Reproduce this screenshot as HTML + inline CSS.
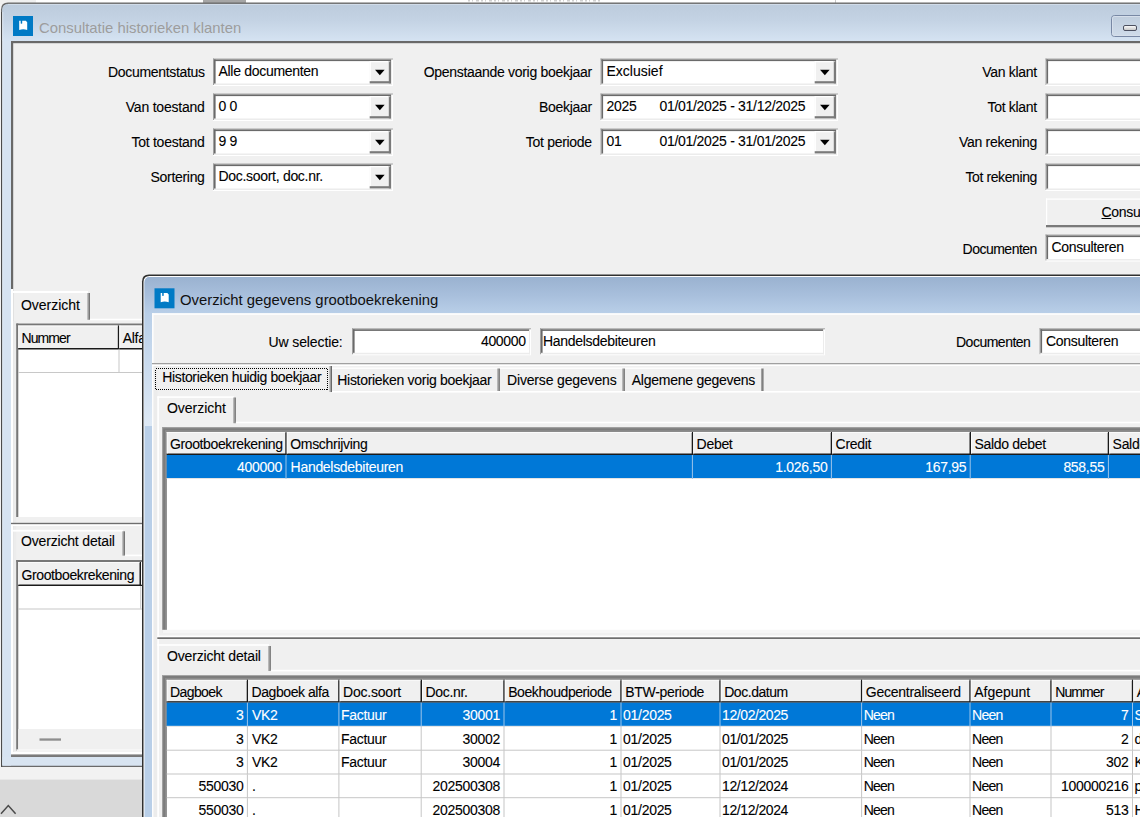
<!DOCTYPE html>
<html lang="nl">
<head>
<meta charset="utf-8">
<title>Consultatie historieken klanten</title>
<style>
*{box-sizing:border-box;margin:0;padding:0}
html,body{width:1140px;height:817px;overflow:hidden;background:#f2f2f2}
body{position:relative;font-family:"Liberation Sans",sans-serif;font-size:14px;letter-spacing:-0.3px;color:#000;line-height:16px;-webkit-text-stroke:0.1px #000}
svg{position:absolute;left:0;top:0}
.t{position:absolute;white-space:nowrap;height:16px;line-height:16px}
.r{text-align:right}
.w{color:#fff;-webkit-text-stroke-color:#fff}
.ttl{letter-spacing:0;-webkit-text-stroke:0;position:absolute;white-space:nowrap;font-size:15px;transform:scaleX(.99);line-height:20px;height:20px;transform-origin:0 50%}
</style>
</head>
<body>
<svg width="1140" height="817" viewBox="0 0 1140 817">
<rect x="0" y="0" width="1140" height="817" fill="#f2f2f2"/>
<rect x="0" y="0" width="1140" height="4" fill="#fff"/>
<rect x="0" y="0" width="36" height="4" fill="#f0f0f0"/>
<rect x="203" y="0" width="43" height="3" fill="#a6a6a6"/>
<rect x="835" y="0" width="1" height="3" fill="#c8c8c8"/>
<path d="M468 0.7 H600" stroke="#cfcfcf" stroke-width="1.6" stroke-dasharray="2 2 1 3 3 2"/>
<rect x="0" y="779.6" width="1140" height="37.4" fill="#d9d9d9"/>
<path d="M1 813.8 L8.3 805.6 L15.6 813.8" fill="none" stroke="#4a4a4a" stroke-width="1.5"/>
<defs><linearGradient id="g1" x1="0" y1="0" x2="0" y2="1"><stop offset="0" stop-color="#bccbdc"/><stop offset=".45" stop-color="#c4d3e4"/><stop offset="1" stop-color="#d5e3f2"/></linearGradient><linearGradient id="gm" x1="0" y1="0" x2="0" y2="1"><stop offset="0" stop-color="#fff"/><stop offset="1" stop-color="#c4c4c4"/></linearGradient><linearGradient id="gb" x1="0" y1="0" x2="0" y2="1"><stop offset="0" stop-color="#bfcddd"/><stop offset="1" stop-color="#d0dcea"/></linearGradient></defs>
<path d="M1 767 L1 9.5 Q1 2.5 8 2.5 L1200 2.5 L1200 767 Z" fill="#6a6a6a"/>
<path d="M2.3 765.5 L2.3 10 Q2.3 3.9 8.5 3.9 L1200 3.9 L1200 765.5 Z" fill="#d6e3f1"/>
<path d="M2.3 41 L2.3 10 Q2.3 3.9 8.5 3.9 L1200 3.9 L1200 41 Z" fill="url(#g1)"/>
<rect x="1" y="12" width="1.2" height="755" fill="#4c4c4c"/>
<rect x="8" y="3.9" width="1192" height="1" fill="#d3deea"/>
<rect x="2.3" y="12" width="0.9" height="745" fill="#e6eef7"/>
<rect x="13" y="16" width="20" height="20" fill="#007ac5"/>
<path transform="translate(13 16)" d="M6.2 4.8 L7.7 4.8 L7.7 7.4 L8.45 7.8 L9.2 7.4 L9.2 4.8 L12.8 4.8 L14.2 6.2 L14.2 13.9 Q10.2 12.7 6.2 13.9 Z" fill="#fff"/>
<rect x="1111.5" y="15.5" width="40" height="21" rx="3" fill="url(#gb)" stroke="#7888a4"/>
<rect x="1112.5" y="16.5" width="38" height="19" rx="2" fill="none" stroke="#d6dfeb"/>
<rect x="1123.5" y="25.5" width="13" height="5" rx="1.5" fill="url(#gm)" stroke="#4c5060"/>
<rect x="11" y="41" width="1189" height="716" fill="#696969"/>
<rect x="13.2" y="43.2" width="1186.8" height="711.3" fill="#f0f0f0"/>
<rect x="11" y="289" width="2.3" height="465.5" fill="#fff"/>
<rect x="13.3" y="321" width="2.9" height="430.5" fill="#ececec"/>
<rect x="11" y="751.8" width="1189" height="2.7" fill="#fff"/>
<rect x="11" y="754.6" width="1189" height="2.2" fill="#7c7c7c"/>
<rect x="2.3" y="757" width="8.7" height="8.5" fill="#d8e4f1"/>
<rect x="2.3" y="757" width="1197.7" height="8.5" fill="#d8e4f1"/>
<rect x="213" y="58.5" width="180" height="27.5" fill="#fff"/>
<rect x="213" y="58.5" width="180" height="1" fill="#a0a0a0"/>
<rect x="213" y="58.5" width="1" height="26.5" fill="#a0a0a0"/>
<rect x="214" y="59.5" width="178" height="1.6" fill="#6a6a6a"/>
<rect x="214" y="59.5" width="1.6" height="24.5" fill="#6a6a6a"/>
<rect x="214" y="83.5" width="178" height="1.5" fill="#ececec"/>
<rect x="391" y="59.5" width="1" height="25.5" fill="#ececec"/>
<rect x="369.7" y="61.1" width="21.3" height="22.3" fill="#f0f0f0"/>
<rect x="369.7" y="61.1" width="20.3" height="1.2" fill="#fff"/>
<rect x="369.7" y="61.1" width="1.2" height="21.3" fill="#fff"/>
<rect x="388.8" y="61.1" width="2.2" height="22.3" fill="#7a7a7a"/>
<rect x="369.7" y="81.2" width="21.3" height="2.2" fill="#7a7a7a"/>
<rect x="388.8" y="61.1" width="1.2" height="1" fill="#c0c0c0"/>
<path d="M375.05 69.65 L384.65 69.65 L379.85 75.35 Z" fill="#000"/>
<rect x="213" y="93.5" width="180" height="27.5" fill="#fff"/>
<rect x="213" y="93.5" width="180" height="1" fill="#a0a0a0"/>
<rect x="213" y="93.5" width="1" height="26.5" fill="#a0a0a0"/>
<rect x="214" y="94.5" width="178" height="1.6" fill="#6a6a6a"/>
<rect x="214" y="94.5" width="1.6" height="24.5" fill="#6a6a6a"/>
<rect x="214" y="118.5" width="178" height="1.5" fill="#ececec"/>
<rect x="391" y="94.5" width="1" height="25.5" fill="#ececec"/>
<rect x="369.7" y="96.1" width="21.3" height="22.3" fill="#f0f0f0"/>
<rect x="369.7" y="96.1" width="20.3" height="1.2" fill="#fff"/>
<rect x="369.7" y="96.1" width="1.2" height="21.3" fill="#fff"/>
<rect x="388.8" y="96.1" width="2.2" height="22.3" fill="#7a7a7a"/>
<rect x="369.7" y="116.2" width="21.3" height="2.2" fill="#7a7a7a"/>
<rect x="388.8" y="96.1" width="1.2" height="1" fill="#c0c0c0"/>
<path d="M375.05 104.65 L384.65 104.65 L379.85 110.35 Z" fill="#000"/>
<rect x="213" y="128.5" width="180" height="27.5" fill="#fff"/>
<rect x="213" y="128.5" width="180" height="1" fill="#a0a0a0"/>
<rect x="213" y="128.5" width="1" height="26.5" fill="#a0a0a0"/>
<rect x="214" y="129.5" width="178" height="1.6" fill="#6a6a6a"/>
<rect x="214" y="129.5" width="1.6" height="24.5" fill="#6a6a6a"/>
<rect x="214" y="153.5" width="178" height="1.5" fill="#ececec"/>
<rect x="391" y="129.5" width="1" height="25.5" fill="#ececec"/>
<rect x="369.7" y="131.1" width="21.3" height="22.3" fill="#f0f0f0"/>
<rect x="369.7" y="131.1" width="20.3" height="1.2" fill="#fff"/>
<rect x="369.7" y="131.1" width="1.2" height="21.3" fill="#fff"/>
<rect x="388.8" y="131.1" width="2.2" height="22.3" fill="#7a7a7a"/>
<rect x="369.7" y="151.2" width="21.3" height="2.2" fill="#7a7a7a"/>
<rect x="388.8" y="131.1" width="1.2" height="1" fill="#c0c0c0"/>
<path d="M375.05 139.65 L384.65 139.65 L379.85 145.35 Z" fill="#000"/>
<rect x="213" y="163.5" width="180" height="27.5" fill="#fff"/>
<rect x="213" y="163.5" width="180" height="1" fill="#a0a0a0"/>
<rect x="213" y="163.5" width="1" height="26.5" fill="#a0a0a0"/>
<rect x="214" y="164.5" width="178" height="1.6" fill="#6a6a6a"/>
<rect x="214" y="164.5" width="1.6" height="24.5" fill="#6a6a6a"/>
<rect x="214" y="188.5" width="178" height="1.5" fill="#ececec"/>
<rect x="391" y="164.5" width="1" height="25.5" fill="#ececec"/>
<rect x="369.7" y="166.1" width="21.3" height="22.3" fill="#f0f0f0"/>
<rect x="369.7" y="166.1" width="20.3" height="1.2" fill="#fff"/>
<rect x="369.7" y="166.1" width="1.2" height="21.3" fill="#fff"/>
<rect x="388.8" y="166.1" width="2.2" height="22.3" fill="#7a7a7a"/>
<rect x="369.7" y="186.2" width="21.3" height="2.2" fill="#7a7a7a"/>
<rect x="388.8" y="166.1" width="1.2" height="1" fill="#c0c0c0"/>
<path d="M375.05 174.65 L384.65 174.65 L379.85 180.35 Z" fill="#000"/>
<rect x="600.5" y="58.5" width="237.5" height="27.5" fill="#fff"/>
<rect x="600.5" y="58.5" width="237.5" height="1" fill="#a0a0a0"/>
<rect x="600.5" y="58.5" width="1" height="26.5" fill="#a0a0a0"/>
<rect x="601.5" y="59.5" width="235.5" height="1.6" fill="#6a6a6a"/>
<rect x="601.5" y="59.5" width="1.6" height="24.5" fill="#6a6a6a"/>
<rect x="601.5" y="83.5" width="235.5" height="1.5" fill="#ececec"/>
<rect x="836" y="59.5" width="1" height="25.5" fill="#ececec"/>
<rect x="814.7" y="61.1" width="21.3" height="22.3" fill="#f0f0f0"/>
<rect x="814.7" y="61.1" width="20.3" height="1.2" fill="#fff"/>
<rect x="814.7" y="61.1" width="1.2" height="21.3" fill="#fff"/>
<rect x="833.8" y="61.1" width="2.2" height="22.3" fill="#7a7a7a"/>
<rect x="814.7" y="81.2" width="21.3" height="2.2" fill="#7a7a7a"/>
<rect x="833.8" y="61.1" width="1.2" height="1" fill="#c0c0c0"/>
<path d="M820.05 69.65 L829.65 69.65 L824.85 75.35 Z" fill="#000"/>
<rect x="600.5" y="93.5" width="237.5" height="27.5" fill="#fff"/>
<rect x="600.5" y="93.5" width="237.5" height="1" fill="#a0a0a0"/>
<rect x="600.5" y="93.5" width="1" height="26.5" fill="#a0a0a0"/>
<rect x="601.5" y="94.5" width="235.5" height="1.6" fill="#6a6a6a"/>
<rect x="601.5" y="94.5" width="1.6" height="24.5" fill="#6a6a6a"/>
<rect x="601.5" y="118.5" width="235.5" height="1.5" fill="#ececec"/>
<rect x="836" y="94.5" width="1" height="25.5" fill="#ececec"/>
<rect x="814.7" y="96.1" width="21.3" height="22.3" fill="#f0f0f0"/>
<rect x="814.7" y="96.1" width="20.3" height="1.2" fill="#fff"/>
<rect x="814.7" y="96.1" width="1.2" height="21.3" fill="#fff"/>
<rect x="833.8" y="96.1" width="2.2" height="22.3" fill="#7a7a7a"/>
<rect x="814.7" y="116.2" width="21.3" height="2.2" fill="#7a7a7a"/>
<rect x="833.8" y="96.1" width="1.2" height="1" fill="#c0c0c0"/>
<path d="M820.05 104.65 L829.65 104.65 L824.85 110.35 Z" fill="#000"/>
<rect x="600.5" y="128.5" width="237.5" height="27.5" fill="#fff"/>
<rect x="600.5" y="128.5" width="237.5" height="1" fill="#a0a0a0"/>
<rect x="600.5" y="128.5" width="1" height="26.5" fill="#a0a0a0"/>
<rect x="601.5" y="129.5" width="235.5" height="1.6" fill="#6a6a6a"/>
<rect x="601.5" y="129.5" width="1.6" height="24.5" fill="#6a6a6a"/>
<rect x="601.5" y="153.5" width="235.5" height="1.5" fill="#ececec"/>
<rect x="836" y="129.5" width="1" height="25.5" fill="#ececec"/>
<rect x="814.7" y="131.1" width="21.3" height="22.3" fill="#f0f0f0"/>
<rect x="814.7" y="131.1" width="20.3" height="1.2" fill="#fff"/>
<rect x="814.7" y="131.1" width="1.2" height="21.3" fill="#fff"/>
<rect x="833.8" y="131.1" width="2.2" height="22.3" fill="#7a7a7a"/>
<rect x="814.7" y="151.2" width="21.3" height="2.2" fill="#7a7a7a"/>
<rect x="833.8" y="131.1" width="1.2" height="1" fill="#c0c0c0"/>
<path d="M820.05 139.65 L829.65 139.65 L824.85 145.35 Z" fill="#000"/>
<rect x="1045.5" y="58.5" width="154.5" height="27.5" fill="#fff"/>
<rect x="1045.5" y="58.5" width="154.5" height="1" fill="#a0a0a0"/>
<rect x="1045.5" y="58.5" width="1" height="26.5" fill="#a0a0a0"/>
<rect x="1046.5" y="59.5" width="152.5" height="1.6" fill="#6a6a6a"/>
<rect x="1046.5" y="59.5" width="1.6" height="24.5" fill="#6a6a6a"/>
<rect x="1046.5" y="83.5" width="152.5" height="1.5" fill="#ececec"/>
<rect x="1198" y="59.5" width="1" height="25.5" fill="#ececec"/>
<rect x="1045.5" y="93.5" width="154.5" height="27.5" fill="#fff"/>
<rect x="1045.5" y="93.5" width="154.5" height="1" fill="#a0a0a0"/>
<rect x="1045.5" y="93.5" width="1" height="26.5" fill="#a0a0a0"/>
<rect x="1046.5" y="94.5" width="152.5" height="1.6" fill="#6a6a6a"/>
<rect x="1046.5" y="94.5" width="1.6" height="24.5" fill="#6a6a6a"/>
<rect x="1046.5" y="118.5" width="152.5" height="1.5" fill="#ececec"/>
<rect x="1198" y="94.5" width="1" height="25.5" fill="#ececec"/>
<rect x="1045.5" y="128.5" width="154.5" height="27.5" fill="#fff"/>
<rect x="1045.5" y="128.5" width="154.5" height="1" fill="#a0a0a0"/>
<rect x="1045.5" y="128.5" width="1" height="26.5" fill="#a0a0a0"/>
<rect x="1046.5" y="129.5" width="152.5" height="1.6" fill="#6a6a6a"/>
<rect x="1046.5" y="129.5" width="1.6" height="24.5" fill="#6a6a6a"/>
<rect x="1046.5" y="153.5" width="152.5" height="1.5" fill="#ececec"/>
<rect x="1198" y="129.5" width="1" height="25.5" fill="#ececec"/>
<rect x="1045.5" y="163.5" width="154.5" height="27.5" fill="#fff"/>
<rect x="1045.5" y="163.5" width="154.5" height="1" fill="#a0a0a0"/>
<rect x="1045.5" y="163.5" width="1" height="26.5" fill="#a0a0a0"/>
<rect x="1046.5" y="164.5" width="152.5" height="1.6" fill="#6a6a6a"/>
<rect x="1046.5" y="164.5" width="1.6" height="24.5" fill="#6a6a6a"/>
<rect x="1046.5" y="188.5" width="152.5" height="1.5" fill="#ececec"/>
<rect x="1198" y="164.5" width="1" height="25.5" fill="#ececec"/>
<rect x="1046" y="198.5" width="154" height="28.8" fill="#f0f0f0"/>
<rect x="1046" y="198.5" width="154" height="1.2" fill="#fff"/>
<rect x="1046" y="198.5" width="1.2" height="28.5" fill="#fff"/>
<rect x="1046" y="225" width="154" height="2.3" fill="#7a7a7a"/>
<rect x="1045.5" y="234.5" width="154.5" height="27" fill="#fff"/>
<rect x="1045.5" y="234.5" width="154.5" height="1" fill="#a0a0a0"/>
<rect x="1045.5" y="234.5" width="1" height="26" fill="#a0a0a0"/>
<rect x="1046.5" y="235.5" width="152.5" height="1.6" fill="#6a6a6a"/>
<rect x="1046.5" y="235.5" width="1.6" height="24" fill="#6a6a6a"/>
<rect x="1046.5" y="259" width="152.5" height="1.5" fill="#ececec"/>
<rect x="1198" y="235.5" width="1" height="25" fill="#ececec"/>
<rect x="11" y="291" width="77" height="2" fill="#fff"/>
<rect x="87.4" y="293" width="1.2" height="26.8" fill="#a0a0a0"/>
<rect x="88.6" y="293" width="1.3" height="26.8" fill="#696969"/>
<rect x="89.9" y="318.7" width="1110.1" height="1.6" fill="#fff"/>
<rect x="16.4" y="323.5" width="1183.6" height="193.5" fill="#fff"/>
<rect x="16.4" y="323.5" width="1183.6" height="2" fill="#777"/>
<rect x="16.2" y="323.5" width="2.1" height="193.5" fill="#777"/>
<rect x="18.2" y="325.5" width="101.1" height="24" fill="#1a1a1a"/>
<rect x="18.2" y="325.5" width="99.6" height="22.5" fill="#f0f0f0"/>
<rect x="18.2" y="325.5" width="99.6" height="1" fill="#fbfbfb"/>
<rect x="18.2" y="325.5" width="1" height="22.5" fill="#fbfbfb"/>
<rect x="118.5" y="349.5" width="1" height="22.5" fill="#c8c8c8"/>
<rect x="119.3" y="325.5" width="281.5" height="24" fill="#1a1a1a"/>
<rect x="119.3" y="325.5" width="280" height="22.5" fill="#f0f0f0"/>
<rect x="119.3" y="325.5" width="280" height="1" fill="#fbfbfb"/>
<rect x="119.3" y="325.5" width="1" height="22.5" fill="#fbfbfb"/>
<rect x="400" y="349.5" width="1" height="22.5" fill="#c8c8c8"/>
<rect x="18.2" y="372" width="1181.8" height="1" fill="#c8c8c8"/>
<rect x="11" y="522.8" width="1189" height="1.6" fill="#6e6e6e"/>
<rect x="11" y="524.4" width="1189" height="1.6" fill="#fff"/>
<rect x="11" y="529.8" width="112" height="1.8" fill="#fff"/>
<rect x="122.4" y="531.3" width="1.2" height="24.3" fill="#a0a0a0"/>
<rect x="123.6" y="531.3" width="1.3" height="24.3" fill="#696969"/>
<rect x="124.9" y="554.6" width="1075.1" height="1.6" fill="#fff"/>
<rect x="16.4" y="560" width="1183.6" height="191" fill="#fff"/>
<rect x="16.4" y="560" width="1183.6" height="2" fill="#777"/>
<rect x="16.2" y="560" width="2.1" height="191" fill="#777"/>
<rect x="18.2" y="562" width="122.8" height="24" fill="#1a1a1a"/>
<rect x="18.2" y="562" width="121.3" height="22.5" fill="#f0f0f0"/>
<rect x="18.2" y="562" width="121.3" height="1" fill="#fbfbfb"/>
<rect x="18.2" y="562" width="1" height="22.5" fill="#fbfbfb"/>
<rect x="140.2" y="586" width="1" height="22.5" fill="#c8c8c8"/>
<rect x="141" y="562" width="259.8" height="24" fill="#1a1a1a"/>
<rect x="141" y="562" width="258.3" height="22.5" fill="#f0f0f0"/>
<rect x="141" y="562" width="258.3" height="1" fill="#fbfbfb"/>
<rect x="141" y="562" width="1" height="22.5" fill="#fbfbfb"/>
<rect x="400" y="586" width="1" height="22.5" fill="#c8c8c8"/>
<rect x="18.2" y="608.5" width="1181.8" height="1" fill="#c8c8c8"/>
<rect x="18.2" y="729" width="1181.8" height="20.3" fill="#f0f0f0"/>
<rect x="16.4" y="749.3" width="1183.6" height="1.7" fill="#f4f4f4"/>
<rect x="39.5" y="738.4" width="21.5" height="2.3" fill="#8e8e8e"/>
</svg>
<div class="ttl" id="t1" style="left:39px;top:17.5px;color:#9d9d9d">Consultatie historieken klanten</div>
<div class="t r" style="right:935.4px;top:64.15px;letter-spacing:-0.33px;">Documentstatus</div>
<div class="t" style="left:218.5px;top:62.95px;">Alle documenten</div>
<div class="t r" style="right:935.4px;top:99.15px;letter-spacing:-0.22px;">Van toestand</div>
<div class="t" style="left:218.5px;top:97.95px;">0 0</div>
<div class="t r" style="right:935.4px;top:134.15px;letter-spacing:-0.26px;">Tot toestand</div>
<div class="t" style="left:218.5px;top:132.95px;">9 9</div>
<div class="t r" style="right:935.4px;top:169.15px;">Sortering</div>
<div class="t" style="left:218.5px;top:167.95px;">Doc.soort, doc.nr.</div>
<div class="t r" style="right:548.2px;top:64.15px;">Openstaande vorig boekjaar</div>
<div class="t" style="left:606.5px;top:62.95px;letter-spacing:0px;">Exclusief</div>
<div class="t r" style="right:548.2px;top:99.15px;">Boekjaar</div>
<div class="t" style="left:606.5px;top:97.95px;">2025</div>
<div class="t" style="left:659.5px;top:97.95px;">01/01/2025 - 31/12/2025</div>
<div class="t r" style="right:548.2px;top:134.15px;">Tot periode</div>
<div class="t" style="left:606.5px;top:132.95px;">01</div>
<div class="t" style="left:659.5px;top:132.95px;">01/01/2025 - 31/01/2025</div>
<div class="t r" style="right:103.1px;top:64.15px;">Van klant</div>
<div class="t r" style="right:103.1px;top:99.15px;">Tot klant</div>
<div class="t r" style="right:103.1px;top:134.15px;">Van rekening</div>
<div class="t r" style="right:103.1px;top:169.15px;letter-spacing:-0.4px;">Tot rekening</div>
<div class="t" style="left:1101.5px;top:204.45px;"><u>C</u>onsulteren</div>
<div class="t r" style="right:103.1px;top:240.85px;letter-spacing:-0.5px;">Documenten</div>
<div class="t" style="left:1051.5px;top:239.35px;">Consulteren</div>
<div class="t" style="left:21px;top:296.95px;letter-spacing:-0.03px;">Overzicht</div>
<div class="t" style="left:21.5px;top:330.25px;letter-spacing:-0.9px;">Nummer</div>
<div class="t" style="left:122.7px;top:330.25px;">Alfa</div>
<div class="t" style="left:21px;top:532.85px;letter-spacing:-0.17px;">Overzicht detail</div>
<div class="t" style="left:21.5px;top:566.75px;letter-spacing:-0.38px;">Grootboekrekening</div>
<div class="t" style="left:144.4px;top:566.75px;">Omschrijving</div>
<svg width="1140" height="817" viewBox="0 0 1140 817">
<defs><linearGradient id="g2" x1="0" y1="0" x2="0" y2="1"><stop offset="0" stop-color="#9ab2d0"/><stop offset=".5" stop-color="#a8bfdc"/><stop offset="1" stop-color="#b9cfe8"/></linearGradient></defs>
<path d="M142 817 L142 281.5 Q142 274.5 149 274.5 L1200 274.5 L1200 817 Z" fill="#303030"/>
<path d="M143.5 817 L143.5 282 Q143.5 276 149.5 276 L1200 276 L1200 817 Z" fill="#fff"/>
<path d="M144.5 817 L144.5 282.5 Q144.5 277 150 277 L1200 277 L1200 817 Z" fill="#b9cfe8"/>
<path d="M144.5 313.5 L144.5 282.5 Q144.5 277 150 277 L1200 277 L1200 313.5 Z" fill="url(#g2)"/>
<defs><linearGradient id="g3" x1="0" y1="0" x2="0" y2="1"><stop offset="0" stop-color="#b9cfe8"/><stop offset="1" stop-color="#dee9f5"/></linearGradient></defs>
<rect x="144.5" y="313.5" width="7.5" height="112.5" fill="url(#g3)"/>
<rect x="154.5" y="288.3" width="20" height="20" fill="#007ac5"/>
<path transform="translate(154.5 288.3)" d="M6.2 4.8 L7.7 4.8 L7.7 7.4 L8.45 7.8 L9.2 7.4 L9.2 4.8 L12.8 4.8 L14.2 6.2 L14.2 13.9 Q10.2 12.7 6.2 13.9 Z" fill="#fff"/>
<rect x="152" y="313.3" width="1048" height="503.7" fill="#f0f0f0"/>
<rect x="152" y="313.3" width="1048" height="1.5" fill="#fff"/>
<rect x="152" y="313.3" width="1.6" height="503.7" fill="#fdfdfd"/>
<rect x="153.6" y="366" width="3.7" height="451" fill="#ececec"/>
<rect x="352" y="328.3" width="179" height="27" fill="#fff"/>
<rect x="352" y="328.3" width="179" height="1" fill="#a0a0a0"/>
<rect x="352" y="328.3" width="1" height="26" fill="#a0a0a0"/>
<rect x="353" y="329.3" width="177" height="1.6" fill="#6a6a6a"/>
<rect x="353" y="329.3" width="1.6" height="24" fill="#6a6a6a"/>
<rect x="353" y="352.8" width="177" height="1.5" fill="#ececec"/>
<rect x="529" y="329.3" width="1" height="25" fill="#ececec"/>
<rect x="540" y="328.3" width="285" height="27" fill="#fff"/>
<rect x="540" y="328.3" width="285" height="1" fill="#a0a0a0"/>
<rect x="540" y="328.3" width="1" height="26" fill="#a0a0a0"/>
<rect x="541" y="329.3" width="283" height="1.6" fill="#6a6a6a"/>
<rect x="541" y="329.3" width="1.6" height="24" fill="#6a6a6a"/>
<rect x="541" y="352.8" width="283" height="1.5" fill="#ececec"/>
<rect x="823" y="329.3" width="1" height="25" fill="#ececec"/>
<rect x="1039.5" y="328.3" width="160.5" height="27" fill="#fff"/>
<rect x="1039.5" y="328.3" width="160.5" height="1" fill="#a0a0a0"/>
<rect x="1039.5" y="328.3" width="1" height="26" fill="#a0a0a0"/>
<rect x="1040.5" y="329.3" width="158.5" height="1.6" fill="#6a6a6a"/>
<rect x="1040.5" y="329.3" width="1.6" height="24" fill="#6a6a6a"/>
<rect x="1040.5" y="352.8" width="158.5" height="1.5" fill="#ececec"/>
<rect x="1198" y="329.3" width="1" height="25" fill="#ececec"/>
<rect x="152" y="363" width="1048" height="1.5" fill="#a0a0a0"/>
<rect x="152" y="364.5" width="1048" height="1.5" fill="#fff"/>
<rect x="155.5" y="368.5" width="172" height="21" fill="none" stroke="#000" stroke-width="1" stroke-dasharray="1 1" shape-rendering="crispEdges"/>
<rect x="329.5" y="366" width="1.2" height="26" fill="#a0a0a0"/>
<rect x="330.7" y="366" width="1.3" height="26" fill="#696969"/>
<rect x="332" y="367.5" width="431" height="1.5" fill="#fcfcfc"/>
<rect x="497.3" y="368.5" width="1.2" height="22.5" fill="#a0a0a0"/>
<rect x="498.5" y="368.5" width="1.3" height="22.5" fill="#696969"/>
<rect x="622.3" y="368.5" width="1.2" height="22.5" fill="#a0a0a0"/>
<rect x="623.5" y="368.5" width="1.3" height="22.5" fill="#696969"/>
<rect x="761" y="368.5" width="1.2" height="22.5" fill="#a0a0a0"/>
<rect x="762.2" y="368.5" width="1.3" height="22.5" fill="#696969"/>
<rect x="332" y="391" width="868" height="1.6" fill="#fff"/>
<rect x="157.3" y="396.3" width="76.7" height="1.6" fill="#fff"/>
<rect x="157.3" y="396.3" width="1.6" height="420.7" fill="#fff"/>
<rect x="233.3" y="397.5" width="1.2" height="25.7" fill="#a0a0a0"/>
<rect x="234.5" y="397.5" width="1.3" height="25.7" fill="#696969"/>
<rect x="235.8" y="421.7" width="964.2" height="1.6" fill="#fff"/>
<rect x="162.1" y="427.2" width="1037.9" height="205.8" fill="#fff"/>
<rect x="162.1" y="427.2" width="1037.9" height="4.8" fill="#7c7c7c"/>
<rect x="162.1" y="427.2" width="4.6" height="205.8" fill="#7c7c7c"/>
<rect x="162.1" y="427.2" width="1037.9" height="1" fill="#a4a4a4"/>
<rect x="162.1" y="427.2" width="1" height="205.8" fill="#a4a4a4"/>
<rect x="165.1" y="430.2" width="1034.9" height="1.8" fill="#8c8c8c"/>
<rect x="165.1" y="430.2" width="1.6" height="202.8" fill="#8c8c8c"/>
<rect x="166.7" y="432" width="120.1" height="23" fill="#1a1a1a"/>
<rect x="166.7" y="432" width="118.6" height="21.5" fill="#f0f0f0"/>
<rect x="166.7" y="432" width="118.6" height="1" fill="#fbfbfb"/>
<rect x="166.7" y="432" width="1" height="21.5" fill="#fbfbfb"/>
<rect x="286.8" y="432" width="406.4" height="23" fill="#1a1a1a"/>
<rect x="286.8" y="432" width="404.9" height="21.5" fill="#f0f0f0"/>
<rect x="286.8" y="432" width="404.9" height="1" fill="#fbfbfb"/>
<rect x="286.8" y="432" width="1" height="21.5" fill="#fbfbfb"/>
<rect x="693.2" y="432" width="139" height="23" fill="#1a1a1a"/>
<rect x="693.2" y="432" width="137.5" height="21.5" fill="#f0f0f0"/>
<rect x="693.2" y="432" width="137.5" height="1" fill="#fbfbfb"/>
<rect x="693.2" y="432" width="1" height="21.5" fill="#fbfbfb"/>
<rect x="832.2" y="432" width="138.8" height="23" fill="#1a1a1a"/>
<rect x="832.2" y="432" width="137.3" height="21.5" fill="#f0f0f0"/>
<rect x="832.2" y="432" width="137.3" height="1" fill="#fbfbfb"/>
<rect x="832.2" y="432" width="1" height="21.5" fill="#fbfbfb"/>
<rect x="971" y="432" width="138.2" height="23" fill="#1a1a1a"/>
<rect x="971" y="432" width="136.7" height="21.5" fill="#f0f0f0"/>
<rect x="971" y="432" width="136.7" height="1" fill="#fbfbfb"/>
<rect x="971" y="432" width="1" height="21.5" fill="#fbfbfb"/>
<rect x="1109.2" y="432" width="191.6" height="23" fill="#1a1a1a"/>
<rect x="1109.2" y="432" width="190.1" height="21.5" fill="#f0f0f0"/>
<rect x="1109.2" y="432" width="190.1" height="1" fill="#fbfbfb"/>
<rect x="1109.2" y="432" width="1" height="21.5" fill="#fbfbfb"/>
<rect x="166.7" y="455" width="1033.3" height="23" fill="#0078d7"/>
<rect x="166.7" y="478" width="1033.3" height="1" fill="#e4e4e4"/>
<rect x="285.5" y="455" width="1" height="24" fill="#9cc4ea"/>
<rect x="691.9" y="455" width="1" height="24" fill="#9cc4ea"/>
<rect x="830.9" y="455" width="1" height="24" fill="#9cc4ea"/>
<rect x="969.7" y="455" width="1" height="24" fill="#9cc4ea"/>
<rect x="1107.9" y="455" width="1" height="24" fill="#9cc4ea"/>
<rect x="1299.5" y="455" width="1" height="24" fill="#9cc4ea"/>
<rect x="162.1" y="629.8" width="1037.9" height="3.2" fill="#f6f6f6"/>
<rect x="157.3" y="635.6" width="1042.7" height="1.7" fill="#fff"/>
<rect x="157.3" y="637.3" width="1042.7" height="1.7" fill="#6e6e6e"/>
<rect x="157.3" y="644.2" width="111.7" height="1.6" fill="#fff"/>
<rect x="268.3" y="646" width="1.2" height="25" fill="#a0a0a0"/>
<rect x="269.5" y="646" width="1.3" height="25" fill="#696969"/>
<rect x="270.8" y="669.8" width="929.2" height="1.6" fill="#fff"/>
<rect x="162.1" y="675" width="1037.9" height="142" fill="#fff"/>
<rect x="162.1" y="675" width="1037.9" height="4.8" fill="#7c7c7c"/>
<rect x="162.1" y="675" width="4.6" height="142" fill="#7c7c7c"/>
<rect x="162.1" y="675" width="1037.9" height="1" fill="#a4a4a4"/>
<rect x="162.1" y="675" width="1" height="142" fill="#a4a4a4"/>
<rect x="165.1" y="678" width="1034.9" height="1.8" fill="#8c8c8c"/>
<rect x="165.1" y="678" width="1.6" height="139" fill="#8c8c8c"/>
<rect x="166.7" y="679.8" width="81.5" height="22.9" fill="#1a1a1a"/>
<rect x="166.7" y="679.8" width="80" height="21.4" fill="#f0f0f0"/>
<rect x="166.7" y="679.8" width="80" height="1" fill="#fbfbfb"/>
<rect x="166.7" y="679.8" width="1" height="21.4" fill="#fbfbfb"/>
<rect x="248.2" y="679.8" width="91.5" height="22.9" fill="#1a1a1a"/>
<rect x="248.2" y="679.8" width="90" height="21.4" fill="#f0f0f0"/>
<rect x="248.2" y="679.8" width="90" height="1" fill="#fbfbfb"/>
<rect x="248.2" y="679.8" width="1" height="21.4" fill="#fbfbfb"/>
<rect x="339.7" y="679.8" width="82.3" height="22.9" fill="#1a1a1a"/>
<rect x="339.7" y="679.8" width="80.8" height="21.4" fill="#f0f0f0"/>
<rect x="339.7" y="679.8" width="80.8" height="1" fill="#fbfbfb"/>
<rect x="339.7" y="679.8" width="1" height="21.4" fill="#fbfbfb"/>
<rect x="422" y="679.8" width="82.8" height="22.9" fill="#1a1a1a"/>
<rect x="422" y="679.8" width="81.3" height="21.4" fill="#f0f0f0"/>
<rect x="422" y="679.8" width="81.3" height="1" fill="#fbfbfb"/>
<rect x="422" y="679.8" width="1" height="21.4" fill="#fbfbfb"/>
<rect x="504.8" y="679.8" width="117" height="22.9" fill="#1a1a1a"/>
<rect x="504.8" y="679.8" width="115.5" height="21.4" fill="#f0f0f0"/>
<rect x="504.8" y="679.8" width="115.5" height="1" fill="#fbfbfb"/>
<rect x="504.8" y="679.8" width="1" height="21.4" fill="#fbfbfb"/>
<rect x="621.8" y="679.8" width="99" height="22.9" fill="#1a1a1a"/>
<rect x="621.8" y="679.8" width="97.5" height="21.4" fill="#f0f0f0"/>
<rect x="621.8" y="679.8" width="97.5" height="1" fill="#fbfbfb"/>
<rect x="621.8" y="679.8" width="1" height="21.4" fill="#fbfbfb"/>
<rect x="720.8" y="679.8" width="141.6" height="22.9" fill="#1a1a1a"/>
<rect x="720.8" y="679.8" width="140.1" height="21.4" fill="#f0f0f0"/>
<rect x="720.8" y="679.8" width="140.1" height="1" fill="#fbfbfb"/>
<rect x="720.8" y="679.8" width="1" height="21.4" fill="#fbfbfb"/>
<rect x="862.4" y="679.8" width="108.4" height="22.9" fill="#1a1a1a"/>
<rect x="862.4" y="679.8" width="106.9" height="21.4" fill="#f0f0f0"/>
<rect x="862.4" y="679.8" width="106.9" height="1" fill="#fbfbfb"/>
<rect x="862.4" y="679.8" width="1" height="21.4" fill="#fbfbfb"/>
<rect x="970.8" y="679.8" width="81" height="22.9" fill="#1a1a1a"/>
<rect x="970.8" y="679.8" width="79.5" height="21.4" fill="#f0f0f0"/>
<rect x="970.8" y="679.8" width="79.5" height="1" fill="#fbfbfb"/>
<rect x="970.8" y="679.8" width="1" height="21.4" fill="#fbfbfb"/>
<rect x="1051.8" y="679.8" width="81.5" height="22.9" fill="#1a1a1a"/>
<rect x="1051.8" y="679.8" width="80" height="21.4" fill="#f0f0f0"/>
<rect x="1051.8" y="679.8" width="80" height="1" fill="#fbfbfb"/>
<rect x="1051.8" y="679.8" width="1" height="21.4" fill="#fbfbfb"/>
<rect x="1133.3" y="679.8" width="167.5" height="22.9" fill="#1a1a1a"/>
<rect x="1133.3" y="679.8" width="166" height="21.4" fill="#f0f0f0"/>
<rect x="1133.3" y="679.8" width="166" height="1" fill="#fbfbfb"/>
<rect x="1133.3" y="679.8" width="1" height="21.4" fill="#fbfbfb"/>
<rect x="166.7" y="702.7" width="1033.3" height="23.2" fill="#0078d7"/>
<rect x="166.7" y="725.9" width="1033.3" height="1" fill="#e4e4e4"/>
<rect x="246.9" y="702.7" width="1" height="24.2" fill="#9cc4ea"/>
<rect x="338.4" y="702.7" width="1" height="24.2" fill="#9cc4ea"/>
<rect x="420.7" y="702.7" width="1" height="24.2" fill="#9cc4ea"/>
<rect x="503.5" y="702.7" width="1" height="24.2" fill="#9cc4ea"/>
<rect x="620.5" y="702.7" width="1" height="24.2" fill="#9cc4ea"/>
<rect x="719.5" y="702.7" width="1" height="24.2" fill="#9cc4ea"/>
<rect x="861.1" y="702.7" width="1" height="24.2" fill="#9cc4ea"/>
<rect x="969.5" y="702.7" width="1" height="24.2" fill="#9cc4ea"/>
<rect x="1050.5" y="702.7" width="1" height="24.2" fill="#9cc4ea"/>
<rect x="1132" y="702.7" width="1" height="24.2" fill="#9cc4ea"/>
<rect x="1299.5" y="702.7" width="1" height="24.2" fill="#9cc4ea"/>
<rect x="166.7" y="749.7" width="1033.3" height="1" fill="#c6c6c6"/>
<rect x="246.9" y="726.9" width="1" height="23.8" fill="#c6c6c6"/>
<rect x="338.4" y="726.9" width="1" height="23.8" fill="#c6c6c6"/>
<rect x="420.7" y="726.9" width="1" height="23.8" fill="#c6c6c6"/>
<rect x="503.5" y="726.9" width="1" height="23.8" fill="#c6c6c6"/>
<rect x="620.5" y="726.9" width="1" height="23.8" fill="#c6c6c6"/>
<rect x="719.5" y="726.9" width="1" height="23.8" fill="#c6c6c6"/>
<rect x="861.1" y="726.9" width="1" height="23.8" fill="#c6c6c6"/>
<rect x="969.5" y="726.9" width="1" height="23.8" fill="#c6c6c6"/>
<rect x="1050.5" y="726.9" width="1" height="23.8" fill="#c6c6c6"/>
<rect x="1132" y="726.9" width="1" height="23.8" fill="#c6c6c6"/>
<rect x="1299.5" y="726.9" width="1" height="23.8" fill="#c6c6c6"/>
<rect x="166.7" y="773.5" width="1033.3" height="1" fill="#c6c6c6"/>
<rect x="246.9" y="750.7" width="1" height="23.8" fill="#c6c6c6"/>
<rect x="338.4" y="750.7" width="1" height="23.8" fill="#c6c6c6"/>
<rect x="420.7" y="750.7" width="1" height="23.8" fill="#c6c6c6"/>
<rect x="503.5" y="750.7" width="1" height="23.8" fill="#c6c6c6"/>
<rect x="620.5" y="750.7" width="1" height="23.8" fill="#c6c6c6"/>
<rect x="719.5" y="750.7" width="1" height="23.8" fill="#c6c6c6"/>
<rect x="861.1" y="750.7" width="1" height="23.8" fill="#c6c6c6"/>
<rect x="969.5" y="750.7" width="1" height="23.8" fill="#c6c6c6"/>
<rect x="1050.5" y="750.7" width="1" height="23.8" fill="#c6c6c6"/>
<rect x="1132" y="750.7" width="1" height="23.8" fill="#c6c6c6"/>
<rect x="1299.5" y="750.7" width="1" height="23.8" fill="#c6c6c6"/>
<rect x="166.7" y="797.2" width="1033.3" height="1" fill="#c6c6c6"/>
<rect x="246.9" y="774.5" width="1" height="23.7" fill="#c6c6c6"/>
<rect x="338.4" y="774.5" width="1" height="23.7" fill="#c6c6c6"/>
<rect x="420.7" y="774.5" width="1" height="23.7" fill="#c6c6c6"/>
<rect x="503.5" y="774.5" width="1" height="23.7" fill="#c6c6c6"/>
<rect x="620.5" y="774.5" width="1" height="23.7" fill="#c6c6c6"/>
<rect x="719.5" y="774.5" width="1" height="23.7" fill="#c6c6c6"/>
<rect x="861.1" y="774.5" width="1" height="23.7" fill="#c6c6c6"/>
<rect x="969.5" y="774.5" width="1" height="23.7" fill="#c6c6c6"/>
<rect x="1050.5" y="774.5" width="1" height="23.7" fill="#c6c6c6"/>
<rect x="1132" y="774.5" width="1" height="23.7" fill="#c6c6c6"/>
<rect x="1299.5" y="774.5" width="1" height="23.7" fill="#c6c6c6"/>
<rect x="166.7" y="821" width="1033.3" height="1" fill="#c6c6c6"/>
<rect x="246.9" y="798.2" width="1" height="23.8" fill="#c6c6c6"/>
<rect x="338.4" y="798.2" width="1" height="23.8" fill="#c6c6c6"/>
<rect x="420.7" y="798.2" width="1" height="23.8" fill="#c6c6c6"/>
<rect x="503.5" y="798.2" width="1" height="23.8" fill="#c6c6c6"/>
<rect x="620.5" y="798.2" width="1" height="23.8" fill="#c6c6c6"/>
<rect x="719.5" y="798.2" width="1" height="23.8" fill="#c6c6c6"/>
<rect x="861.1" y="798.2" width="1" height="23.8" fill="#c6c6c6"/>
<rect x="969.5" y="798.2" width="1" height="23.8" fill="#c6c6c6"/>
<rect x="1050.5" y="798.2" width="1" height="23.8" fill="#c6c6c6"/>
<rect x="1132" y="798.2" width="1" height="23.8" fill="#c6c6c6"/>
<rect x="1299.5" y="798.2" width="1" height="23.8" fill="#c6c6c6"/>
</svg>
<div class="ttl" id="t2" style="left:180px;top:289.7px;color:#111">Overzicht gegevens grootboekrekening</div>
<div class="t" id="uws" style="left:268.5px;top:334.15px;letter-spacing:-0.11px;">Uw selectie:</div>
<div class="t r" style="right:614.2px;top:332.75px;">400000</div>
<div class="t" style="left:543px;top:332.75px;">Handelsdebiteuren</div>
<div class="t" style="left:956px;top:333.75px;letter-spacing:-0.5px;">Documenten</div>
<div class="t" style="left:1046px;top:332.75px;">Consulteren</div>
<div class="t" style="left:162.3px;top:369.15px;letter-spacing:-0.37px;">Historieken huidig boekjaar</div>
<div class="t" style="left:337.3px;top:371.95px;">Historieken vorig boekjaar</div>
<div class="t" style="left:507px;top:371.95px;letter-spacing:-0.16px;">Diverse gegevens</div>
<div class="t" style="left:631.8px;top:371.95px;letter-spacing:-0.26px;">Algemene gegevens</div>
<div class="t" style="left:167px;top:400.25px;letter-spacing:-0.03px;">Overzicht</div>
<div class="t" style="left:170px;top:436.05px;letter-spacing:-0.38px;">Grootboekrekening</div>
<div class="t" style="left:290.2px;top:436.05px;">Omschrijving</div>
<div class="t" style="left:696.6px;top:436.05px;">Debet</div>
<div class="t" style="left:835.6px;top:436.05px;">Credit</div>
<div class="t" style="left:974.4px;top:436.05px;">Saldo debet</div>
<div class="t" style="left:1112.6px;top:436.05px;">Saldo credit</div>
<div class="t w r" style="right:858px;top:458.95px;">400000</div>
<div class="t w" style="left:290.6px;top:458.95px;">Handelsdebiteuren</div>
<div class="t w r" style="right:312.6px;top:458.95px;">1.026,50</div>
<div class="t w r" style="right:173.8px;top:458.95px;">167,95</div>
<div class="t w r" style="right:35.6px;top:458.95px;">858,55</div>
<div class="t" style="left:167px;top:648.05px;letter-spacing:-0.17px;">Overzicht detail</div>
<div class="t" style="left:170px;top:683.75px;letter-spacing:-0.6px;">Dagboek</div>
<div class="t" style="left:251.6px;top:683.75px;letter-spacing:-0.44px;">Dagboek alfa</div>
<div class="t" style="left:343.1px;top:683.75px;letter-spacing:-0.22px;">Doc.soort</div>
<div class="t" style="left:425.4px;top:683.75px;">Doc.nr.</div>
<div class="t" style="left:508.2px;top:683.75px;letter-spacing:-0.42px;">Boekhoudperiode</div>
<div class="t" style="left:625.2px;top:683.75px;">BTW-periode</div>
<div class="t" style="left:724.2px;top:683.75px;letter-spacing:-0.45px;">Doc.datum</div>
<div class="t" style="left:865.8px;top:683.75px;letter-spacing:-0.25px;">Gecentraliseerd</div>
<div class="t" style="left:974.2px;top:683.75px;letter-spacing:0px;">Afgepunt</div>
<div class="t" style="left:1055.2px;top:683.75px;letter-spacing:-0.9px;">Nummer</div>
<div class="t" style="left:1136.7px;top:683.75px;">Alfa</div>
<div class="t w r" style="right:896.6px;top:706.85px;">3</div>
<div class="t w" style="left:252px;top:706.85px;">VK2</div>
<div class="t w" style="left:341px;top:706.85px;">Factuur</div>
<div class="t w r" style="right:640px;top:706.85px;">30001</div>
<div class="t w r" style="right:523px;top:706.85px;">1</div>
<div class="t w" style="left:623.1px;top:706.85px;">01/2025</div>
<div class="t w" style="left:722.1px;top:706.85px;letter-spacing:-0.42px;">12/02/2025</div>
<div class="t w" style="left:863.7px;top:706.85px;letter-spacing:-0.8px;">Neen</div>
<div class="t w" style="left:972.1px;top:706.85px;letter-spacing:-0.8px;">Neen</div>
<div class="t w r" style="right:11.5px;top:706.85px;">7</div>
<div class="t w" style="left:1134.6px;top:706.85px;">S</div>
<div class="t r" style="right:896.6px;top:730.65px;">3</div>
<div class="t" style="left:252px;top:730.65px;">VK2</div>
<div class="t" style="left:341px;top:730.65px;">Factuur</div>
<div class="t r" style="right:640px;top:730.65px;">30002</div>
<div class="t r" style="right:523px;top:730.65px;">1</div>
<div class="t" style="left:623.1px;top:730.65px;">01/2025</div>
<div class="t" style="left:722.1px;top:730.65px;letter-spacing:-0.42px;">01/01/2025</div>
<div class="t" style="left:863.7px;top:730.65px;letter-spacing:-0.8px;">Neen</div>
<div class="t" style="left:972.1px;top:730.65px;letter-spacing:-0.8px;">Neen</div>
<div class="t r" style="right:11.5px;top:730.65px;">2</div>
<div class="t" style="left:1134.6px;top:730.65px;">d</div>
<div class="t r" style="right:896.6px;top:754.45px;">3</div>
<div class="t" style="left:252px;top:754.45px;">VK2</div>
<div class="t" style="left:341px;top:754.45px;">Factuur</div>
<div class="t r" style="right:640px;top:754.45px;">30004</div>
<div class="t r" style="right:523px;top:754.45px;">1</div>
<div class="t" style="left:623.1px;top:754.45px;">01/2025</div>
<div class="t" style="left:722.1px;top:754.45px;letter-spacing:-0.42px;">01/01/2025</div>
<div class="t" style="left:863.7px;top:754.45px;letter-spacing:-0.8px;">Neen</div>
<div class="t" style="left:972.1px;top:754.45px;letter-spacing:-0.8px;">Neen</div>
<div class="t r" style="right:11.5px;top:754.45px;">302</div>
<div class="t" style="left:1134.6px;top:754.45px;">K</div>
<div class="t r" style="right:896.6px;top:778.15px;">550030</div>
<div class="t" style="left:252px;top:778.15px;">.</div>
<div class="t r" style="right:640px;top:778.15px;">202500308</div>
<div class="t r" style="right:523px;top:778.15px;">1</div>
<div class="t" style="left:623.1px;top:778.15px;">01/2025</div>
<div class="t" style="left:722.1px;top:778.15px;letter-spacing:-0.42px;">12/12/2024</div>
<div class="t" style="left:863.7px;top:778.15px;letter-spacing:-0.8px;">Neen</div>
<div class="t" style="left:972.1px;top:778.15px;letter-spacing:-0.8px;">Neen</div>
<div class="t r" style="right:11.5px;top:778.15px;">100000216</div>
<div class="t" style="left:1134.6px;top:778.15px;">p</div>
<div class="t r" style="right:896.6px;top:801.95px;">550030</div>
<div class="t" style="left:252px;top:801.95px;">.</div>
<div class="t r" style="right:640px;top:801.95px;">202500308</div>
<div class="t r" style="right:523px;top:801.95px;">1</div>
<div class="t" style="left:623.1px;top:801.95px;">01/2025</div>
<div class="t" style="left:722.1px;top:801.95px;letter-spacing:-0.42px;">12/12/2024</div>
<div class="t" style="left:863.7px;top:801.95px;letter-spacing:-0.8px;">Neen</div>
<div class="t" style="left:972.1px;top:801.95px;letter-spacing:-0.8px;">Neen</div>
<div class="t r" style="right:11.5px;top:801.95px;">513</div>
<div class="t" style="left:1134.6px;top:801.95px;">H</div>
</body>
</html>
